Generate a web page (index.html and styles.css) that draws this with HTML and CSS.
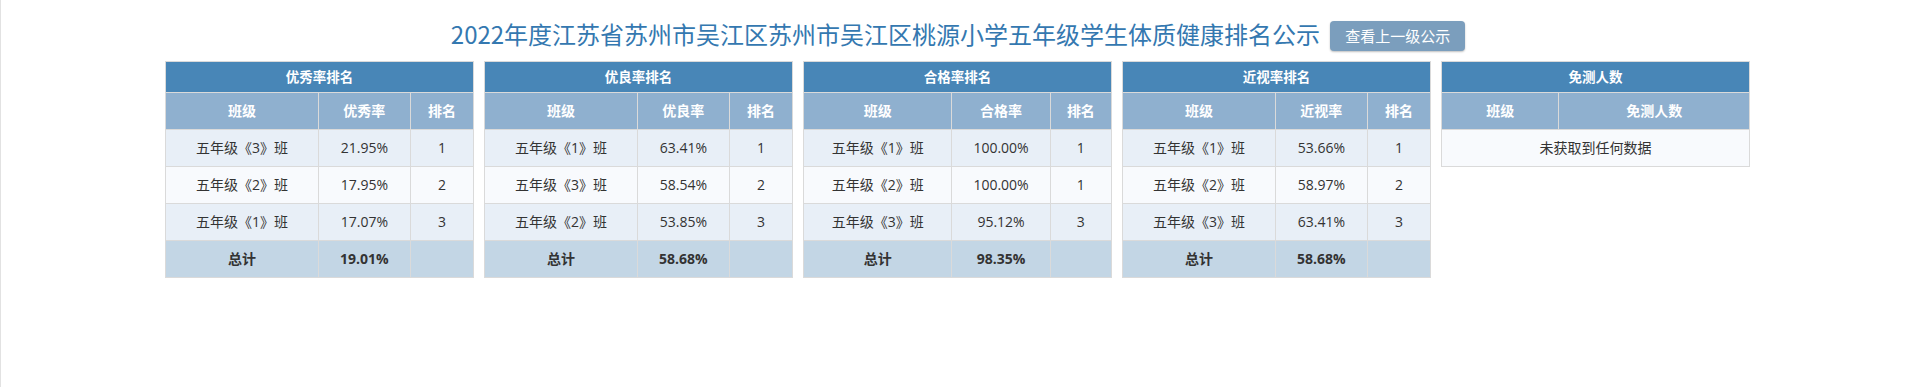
FILE: index.html
```html
<!DOCTYPE html>
<html lang="zh-CN">
<head>
<meta charset="utf-8">
<title>体质健康排名公示</title>
<link rel="stylesheet" href="styles.css">
</head>
<body>
<div class="page">
  <header class="head">
    <h1 class="title">2022年度江苏省苏州市吴江区苏州市吴江区桃源小学五年级学生体质健康排名公示</h1>
    <button class="btn">查看上一级公示</button>
  </header>
  <div class="tables">
    <table class="rank">
      <thead>
        <tr class="cap"><th colspan="3">优秀率排名</th></tr>
        <tr class="hd"><th>班级</th><th>优秀率</th><th>排名</th></tr>
      </thead>
      <tbody>
        <tr class="odd"><td>五年级《3》班</td><td>21.95%</td><td>1</td></tr>
        <tr class="even"><td>五年级《2》班</td><td>17.95%</td><td>2</td></tr>
        <tr class="odd"><td>五年级《1》班</td><td>17.07%</td><td>3</td></tr>
        <tr class="sum"><td>总计</td><td>19.01%</td><td></td></tr>
      </tbody>
    </table>
    <table class="rank">
      <thead>
        <tr class="cap"><th colspan="3">优良率排名</th></tr>
        <tr class="hd"><th>班级</th><th>优良率</th><th>排名</th></tr>
      </thead>
      <tbody>
        <tr class="odd"><td>五年级《1》班</td><td>63.41%</td><td>1</td></tr>
        <tr class="even"><td>五年级《3》班</td><td>58.54%</td><td>2</td></tr>
        <tr class="odd"><td>五年级《2》班</td><td>53.85%</td><td>3</td></tr>
        <tr class="sum"><td>总计</td><td>58.68%</td><td></td></tr>
      </tbody>
    </table>
    <table class="rank">
      <thead>
        <tr class="cap"><th colspan="3">合格率排名</th></tr>
        <tr class="hd"><th>班级</th><th>合格率</th><th>排名</th></tr>
      </thead>
      <tbody>
        <tr class="odd"><td>五年级《1》班</td><td>100.00%</td><td>1</td></tr>
        <tr class="even"><td>五年级《2》班</td><td>100.00%</td><td>1</td></tr>
        <tr class="odd"><td>五年级《3》班</td><td>95.12%</td><td>3</td></tr>
        <tr class="sum"><td>总计</td><td>98.35%</td><td></td></tr>
      </tbody>
    </table>
    <table class="rank">
      <thead>
        <tr class="cap"><th colspan="3">近视率排名</th></tr>
        <tr class="hd"><th>班级</th><th>近视率</th><th>排名</th></tr>
      </thead>
      <tbody>
        <tr class="odd"><td>五年级《1》班</td><td>53.66%</td><td>1</td></tr>
        <tr class="even"><td>五年级《2》班</td><td>58.97%</td><td>2</td></tr>
        <tr class="odd"><td>五年级《3》班</td><td>63.41%</td><td>3</td></tr>
        <tr class="sum"><td>总计</td><td>58.68%</td><td></td></tr>
      </tbody>
    </table>
    <table class="rank">
      <thead>
        <tr class="cap"><th colspan="2">免测人数</th></tr>
        <tr class="hd"><th>班级</th><th>免测人数</th></tr>
      </thead>
      <tbody>
        <tr class="empty"><td colspan="2">未获取到任何数据</td></tr>
      </tbody>
    </table>
  </div>
</div>
</body>
</html>
```

FILE: styles.css
```css
html, body {
  margin: 0;
  padding: 0;
  background: #fff;
}
body {
  border-left: 1px solid #e2e2e2;
  min-height: 100vh;
  box-sizing: border-box;
  font-family: "Open Sans", "Noto Sans CJK SC", sans-serif;
  color: #333;
}
.page {
  padding-top: 21px;
}
.head {
  display: flex;
  justify-content: center;
  align-items: center;
  gap: 10px;
  height: 30px;
  margin-bottom: 10px;
}
.title {
  margin: 0;
  font-family: "Noto Sans CJK SC", sans-serif;
  font-weight: 400;
  font-size: 24px;
  line-height: 30px;
  color: #3478b0;
  position: relative;
  top: -2px;
}
.btn {
  height: 30px;
  padding: 0 15px;
  border: none;
  border-radius: 4px;
  background: #7b9ebd;
  color: #fff;
  font-family: "Noto Sans CJK SC", sans-serif;
  font-size: 15px;
  line-height: 30px;
  box-shadow: 0 1px 2px rgba(0, 0, 0, 0.25);
}
.tables {
  display: flex;
  justify-content: center;
  align-items: flex-start;
  gap: 10px;
  margin-left: -1px;
}
.rank {
  width: 309px;
  border-collapse: collapse;
  border: 1px solid #dadada;
  font-size: 14px;
  text-align: center;
}
.rank th, .rank td {
  border: 1px solid #dadada;
  padding: 8px 8px;
  line-height: 20px;
  white-space: nowrap;
}
.rank .cap th {
  background: #4886b7;
  color: #fff;
  font-weight: 700;
  font-size: 13.5px;
  padding: 5px 8px;
}
.rank .hd th {
  background: #8fb0cf;
  color: #fff;
  font-weight: 700;
}
.rank .odd td {
  background: #e8eff7;
}
.rank .even td {
  background: #f8fafd;
}
.rank .sum td {
  background: #c3d6e5;
  font-weight: 700;
}
.rank .empty td {
  background: #f8fafd;
}
```
